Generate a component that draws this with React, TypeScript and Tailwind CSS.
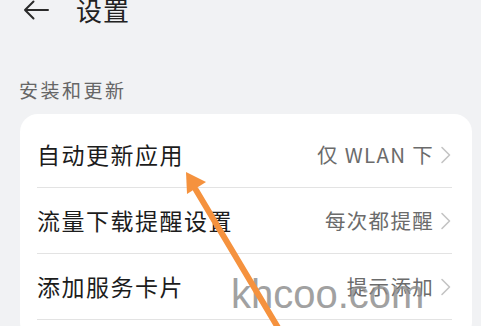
import React from "react";

const rows = [
  { title: "自动更新应用", value: "仅 WLAN 下" },
  { title: "流量下载提醒设置", value: "每次都提醒" },
  { title: "添加服务卡片", value: "提示添加" },
];

function Chevron() {
  return (
    <svg width="12" height="18" viewBox="0 0 12 18" className="ml-[6px] shrink-0">
      <path d="M2 1.5 L9.5 9 L2 16.5" fill="none" stroke="#c4c4c4" strokeWidth="1.6" strokeLinecap="round" strokeLinejoin="round" />
    </svg>
  );
}

export default function App() {
  return (
    <div
      className="relative w-[481px] h-[326px] overflow-hidden bg-[#f1f2f4] text-[#222]"
      style={{ fontFamily: '"Noto Sans CJK SC", "Noto Sans", sans-serif' }}
    >
      {/* header */}
      <div className="flex items-center h-[24px] mt-[-2px] pl-[22px]">
        <svg width="28" height="22" viewBox="0 0 28 22" className="shrink-0">
          <path d="M26 11 H3 M11.5 2.5 L3 11 L11.5 19.5" fill="none" stroke="#2a2a2a" strokeWidth="2" strokeLinecap="round" strokeLinejoin="round" />
        </svg>
        <div className="ml-[26px] text-[26px] leading-none tracking-[1px] text-[#222]">设置</div>
      </div>

      {/* section label */}
      <div className="mt-[58px] pl-[19px] text-[19px] leading-none tracking-[2.5px] text-[#666]">
        安装和更新
      </div>

      {/* card */}
      <div className="mt-[15px] ml-[20px] mr-[9px] bg-white rounded-[18px] pt-[8px] pl-[17px] pr-[20px] pb-[20px]">
        {rows.map((r, i) => (
          <div key={i} className="h-[66px] flex items-center border-b border-[#e3e3e3]">
            <div className="text-[23px] leading-none tracking-[1.5px] text-[#1c1c1c]">{r.title}</div>
            <div className="ml-auto flex items-center">
              <span className="text-[20.5px] leading-none tracking-[1.3px] text-[#6b6b6b]">{r.value}</span>
              <Chevron />
            </div>
          </div>
        ))}
      </div>

      {/* watermark */}
      <div
        className="absolute left-[231px] top-[274px] text-[40px] leading-none text-[#8a8a8a] opacity-80"
        style={{ fontFamily: '"Liberation Sans", Arial, sans-serif' }}
      >
        khcoo.com
      </div>

      {/* orange arrow annotation */}
      <svg className="absolute left-0 top-0" width="481" height="326" viewBox="0 0 481 326">
        <line x1="196" y1="190" x2="283" y2="336" stroke="#f5923e" strokeWidth="6" strokeLinecap="round" />
        <polygon points="186,172 187,194 206,182" fill="#f5923e" />
      </svg>
    </div>
  );
}
